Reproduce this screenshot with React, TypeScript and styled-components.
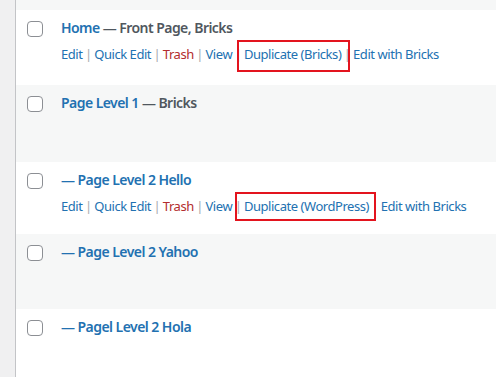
import React from 'react';
import styled, { createGlobalStyle } from 'styled-components';

const GlobalStyle = createGlobalStyle`
  html, body {
    margin: 0;
    padding: 0;
    background: #f0f0f1;
  }
  body {
    font-family: 'Noto Sans', 'Open Sans', sans-serif;
  }
`;

interface Action {
  label: string;
  danger?: boolean;
  marked?: boolean;
}

interface PageRow {
  title: string;
  state?: string;
  height: number;
  actions?: Action[];
  mark?: { left: number; right: number; top: number; bottom: number };
}

const actionsFor = (dup: string): Action[] => [
  { label: 'Edit' },
  { label: 'Quick Edit' },
  { label: 'Trash', danger: true },
  { label: 'View' },
  { label: dup, marked: true },
  { label: 'Edit with Bricks' },
];

const rows: PageRow[] = [
  {
    title: 'Home',
    state: ' — Front Page, Bricks',
    height: 75,
    actions: actionsFor('Duplicate (Bricks)'),
    mark: { left: -7, right: -9, top: -5, bottom: -9 },
  },
  { title: 'Page Level 1', state: ' — Bricks', height: 77 },
  {
    title: '— Page Level 2 Hello',
    height: 72,
    actions: actionsFor('Duplicate (WordPress)'),
    mark: { left: -9, right: -7, top: -5, bottom: -6 },
  },
  { title: '— Page Level 2 Yahoo', height: 75 },
  { title: '— Pagel Level 2 Hola', height: 75 },
];

export default function App() {
  return (
    <>
      <GlobalStyle />
      <Screen>
        <Table>
          <Stub />
          {rows.map((row, i) => (
            <Row key={row.title} $alt={i % 2 === 1} $height={row.height}>
              <CheckCell>
                <Checkbox type="checkbox" />
              </CheckCell>
              <TitleCell>
                <Title>
                  <TitleLink>{row.title}</TitleLink>
                  {row.state && <PostState>{row.state}</PostState>}
                </Title>
                {row.actions && (
                  <Actions>
                    {row.actions.map((a, j) => (
                      <span key={a.label}>
                        {a.marked && row.mark ? (
                          <Marked>
                            <ActionLink $danger={a.danger}>{a.label}</ActionLink>
                            <MarkBox
                              style={{
                                left: row.mark.left,
                                right: row.mark.right,
                                top: row.mark.top,
                                bottom: row.mark.bottom,
                              }}
                            />
                          </Marked>
                        ) : (
                          <ActionLink $danger={a.danger}>{a.label}</ActionLink>
                        )}
                        {j < row.actions!.length - 1 && <Sep>|</Sep>}
                      </span>
                    ))}
                  </Actions>
                )}
              </TitleCell>
            </Row>
          ))}
        </Table>
      </Screen>
    </>
  );
}

const Screen = styled.div`
  width: 496px;
  height: 377px;
  overflow: hidden;
  padding-left: 15px;
  box-sizing: border-box;
`;

const Table = styled.div`
  border-left: 1px solid #c3c4c7;
  background: #fff;
  min-height: 377px;
`;

const Stub = styled.div`
  height: 10px;
  background: #f6f7f7;
`;

const Row = styled.div<{ $alt?: boolean; $height: number }>`
  display: flex;
  height: ${(p) => p.$height}px;
  background: ${(p) => (p.$alt ? '#f6f7f7' : '#fff')};
`;

const CheckCell = styled.div`
  width: 45px;
  flex-shrink: 0;
  padding: 11px 0 0 11px;
  box-sizing: border-box;
`;

const Checkbox = styled.input`
  appearance: none;
  margin: 0;
  display: block;
  width: 16px;
  height: 16px;
  border: 1px solid #8c8f94;
  border-radius: 4px;
  background: #fff;
  box-sizing: border-box;
`;

const TitleCell = styled.div`
  flex: 1;
  padding-top: 8px;
`;

const Title = styled.div`
  font-size: 14px;
  font-weight: 600;
  line-height: 20px;
  white-space: nowrap;
  letter-spacing: -0.55px;
`;

const TitleLink = styled.span`
  color: #2271b1;
`;

const PostState = styled.span`
  color: #50575e;
`;

const Actions = styled.div`
  margin-top: 7px;
  font-size: 13px;
  line-height: 18px;
  white-space: nowrap;
  letter-spacing: -0.45px;
  color: #a7aaad;
`;

const ActionLink = styled.span<{ $danger?: boolean }>`
  color: ${(p) => (p.$danger ? '#b32d2e' : '#2271b1')};
`;

const Sep = styled.span`
  color: #a7aaad;
  margin: 0 2.5px;
`;

const Marked = styled.span`
  position: relative;
`;

const MarkBox = styled.span`
  position: absolute;
  border: 2px solid #e3141e;
  pointer-events: none;
`;
